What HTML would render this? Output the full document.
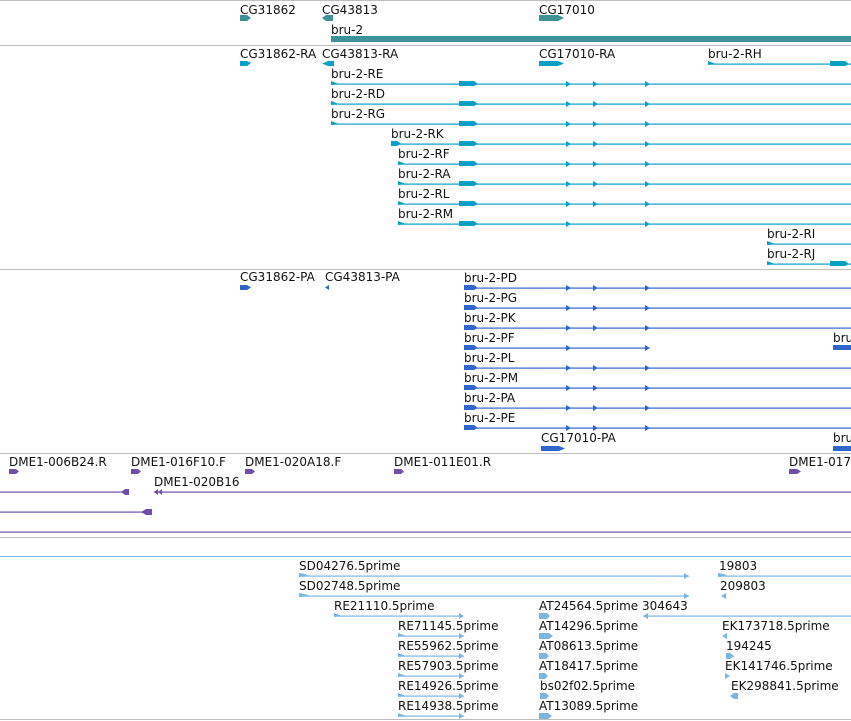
<!DOCTYPE html>
<html><head><meta charset="utf-8"><style>
html,body{margin:0;padding:0;background:#fff;}
svg{display:block;}
text{font-family:"DejaVu Sans","Liberation Sans",sans-serif;font-size:12px;fill:#111;}
</style></head><body>
<svg width="851" height="721" viewBox="0 0 851 721" xmlns="http://www.w3.org/2000/svg">
<defs>
<path id="st" d="M0,-3 L8,0 L0,1 Z"/>
<path id="ar" d="M0,-3 L5,0 L0,3 Z"/>
<path id="bx" d="M0,-3 L15,-3 L19,0 L15,2 L0,2 Z"/>
</defs>
<!-- separators -->
<g fill="#bdbdbd">
<rect x="0" y="0" width="851" height="1"/>
<rect x="0" y="45" width="851" height="1"/>
<rect x="0" y="269" width="851" height="1"/>
<rect x="0" y="453" width="851" height="1"/>
<rect x="0" y="537" width="851" height="1"/>
<rect x="0" y="719" width="851" height="1"/>
</g>
<rect x="0" y="556" width="851" height="1" fill="#7ab6e0"/>

<!-- genes -->
<text x="240" y="14">CG31862</text>
<text x="322" y="14">CG43813</text>
<text x="539" y="14">CG17010</text>
<text x="331" y="34">bru-2</text>
<g fill="#3d9197">
<path d="M240,15 L247,15 L251,18 L247,21 L240,21 Z"/>
<path d="M333,15 L326,15 L322,18 L326,21 L333,21 Z"/>
<path d="M539,15 L558,15 L564,18 L558,21 L539,21 Z"/>
<rect x="331" y="36" width="520" height="6"/>
</g>

<!-- transcripts -->
<text x="240" y="58">CG31862-RA</text>
<text x="322" y="58">CG43813-RA</text>
<text x="539" y="58">CG17010-RA</text>
<text x="708" y="58">bru-2-RH</text>
<text x="331" y="78">bru-2-RE</text>
<text x="331" y="98">bru-2-RD</text>
<text x="331" y="118">bru-2-RG</text>
<text x="391" y="138">bru-2-RK</text>
<text x="398" y="158">bru-2-RF</text>
<text x="398" y="178">bru-2-RA</text>
<text x="398" y="198">bru-2-RL</text>
<text x="398" y="218">bru-2-RM</text>
<text x="767" y="238">bru-2-RI</text>
<text x="767" y="258">bru-2-RJ</text>
<g fill="#0aa0c6">
<path d="M240,61 L247,61 L251,63 L247,66 L240,66 Z"/>
<path d="M334,61 L328,61 L322,63.5 L328,66 L334,66 Z"/>
<path d="M539,61 L558,61 L564,63.5 L558,66 L539,66 Z"/>
<rect x="708" y="63.5" width="143" height="1.2"/><use href="#st" x="708" y="64"/><use href="#bx" x="830" y="64" transform="scale(1)"/>
<rect x="331" y="83.5" width="520" height="1.2"/><use href="#st" x="331" y="84"/><use href="#bx" x="459" y="84"/><use href="#ar" x="566" y="84"/><use href="#ar" x="593" y="84"/><use href="#ar" x="645" y="84"/>
<rect x="331" y="103.5" width="520" height="1.2"/><use href="#st" x="331" y="104"/><use href="#bx" x="459" y="104"/><use href="#ar" x="566" y="104"/><use href="#ar" x="593" y="104"/><use href="#ar" x="645" y="104"/>
<rect x="331" y="123.5" width="520" height="1.2"/><use href="#st" x="331" y="124"/><use href="#bx" x="459" y="124"/><use href="#ar" x="566" y="124"/><use href="#ar" x="593" y="124"/><use href="#ar" x="645" y="124"/>
<rect x="391" y="143.5" width="460" height="1.2"/><path d="M391,141 L397,141 L401,143.5 L397,146 L391,146 Z"/><use href="#bx" x="459" y="144"/><use href="#ar" x="566" y="144"/><use href="#ar" x="593" y="144"/><use href="#ar" x="645" y="144"/>
<rect x="398" y="163.5" width="453" height="1.2"/><use href="#st" x="398" y="164"/><use href="#bx" x="459" y="164"/><use href="#ar" x="566" y="164"/><use href="#ar" x="593" y="164"/><use href="#ar" x="645" y="164"/>
<rect x="398" y="183.5" width="453" height="1.2"/><use href="#st" x="398" y="184"/><use href="#bx" x="459" y="184"/><use href="#ar" x="566" y="184"/><use href="#ar" x="593" y="184"/><use href="#ar" x="645" y="184"/>
<rect x="398" y="203.5" width="453" height="1.2"/><use href="#st" x="398" y="204"/><use href="#bx" x="459" y="204"/><use href="#ar" x="566" y="204"/><use href="#ar" x="593" y="204"/><use href="#ar" x="645" y="204"/>
<rect x="398" y="223.5" width="453" height="1.2"/><use href="#st" x="398" y="224"/><use href="#bx" x="459" y="224"/><use href="#ar" x="566" y="224"/><use href="#ar" x="645" y="224"/>
<rect x="767" y="243.5" width="84" height="1.2"/><use href="#st" x="767" y="244"/>
<rect x="767" y="263.5" width="84" height="1.2"/><use href="#st" x="767" y="264"/><use href="#bx" x="830" y="264"/>
</g>

<!-- proteins -->
<text x="240" y="281">CG31862-PA</text>
<text x="325" y="281">CG43813-PA</text>
<text x="464" y="282">bru-2-PD</text>
<text x="464" y="302">bru-2-PG</text>
<text x="464" y="322">bru-2-PK</text>
<text x="464" y="342">bru-2-PF</text>
<text x="833" y="342">bru-2</text>
<text x="464" y="362">bru-2-PL</text>
<text x="464" y="382">bru-2-PM</text>
<text x="464" y="402">bru-2-PA</text>
<text x="464" y="422">bru-2-PE</text>
<text x="541" y="442">CG17010-PA</text>
<text x="833" y="442">bru-2</text>
<g fill="#2f66cc">
<path d="M240,285 L247,285 L251,287.5 L247,290 L240,290 Z"/>
<path d="M329,285 L325,287.5 L329,290 Z"/>
<g id="p1"><rect x="464" y="287.5" width="387" height="1.2"/><path d="M464,285 L474,285 L478,288 L474,290 L464,290 Z"/><use href="#ar" x="566" y="288"/><use href="#ar" x="593" y="288"/><use href="#ar" x="645" y="288"/></g>
<use href="#p1" y="20"/><use href="#p1" y="40"/>
<rect x="464" y="347.5" width="182" height="1.2"/><path d="M464,345 L474,345 L478,348 L474,350 L464,350 Z"/><use href="#ar" x="566" y="348"/><use href="#ar" x="645" y="348"/>
<rect x="833" y="347.5" width="18" height="1.2"/><path d="M833,345 L851,345 L851,350 L833,350 Z"/>
<use href="#p1" y="80"/><use href="#p1" y="100"/><use href="#p1" y="120"/><use href="#p1" y="140"/>
<path d="M541,446 L559,446 L565,448.5 L559,451 L541,451 Z"/>
<rect x="833" y="446" width="18" height="5"/>
</g>

<!-- purple -->
<text x="9" y="466">DME1-006B24.R</text>
<text x="131" y="466">DME1-016F10.F</text>
<text x="245" y="466">DME1-020A18.F</text>
<text x="394" y="466">DME1-011E01.R</text>
<text x="789" y="466">DME1-017</text>
<text x="154" y="486">DME1-020B16</text>
<g fill="#6f4fa8">
<path d="M9,469 L16,469 L19,471.5 L16,474 L9,474 Z"/>
<path d="M131,469 L138,469 L141,471.5 L138,474 L131,474 Z"/>
<path d="M245,469 L252,469 L255,471.5 L252,474 L245,474 Z"/>
<path d="M394,469 L401,469 L404,471.5 L401,474 L394,474 Z"/>
<path d="M789,469 L797,469 L801,471.5 L797,474 L789,474 Z"/>
<rect x="0" y="491.5" width="129" height="1.2"/><path d="M129,489 L125,489 L121,492 L125,495 L129,495 Z"/>
<rect x="154" y="491.5" width="697" height="1.2"/><path d="M154,492 L158,489 L158,495 Z M158,492 L162,489 L162,495 Z"/>
<rect x="0" y="511.5" width="152" height="1.2"/><path d="M152,509 L146,509 L141,512 L146,515 L152,515 Z"/>
<rect x="0" y="531.5" width="851" height="1.2"/>
</g>

<!-- ESTs -->
<text x="299" y="570">SD04276.5prime</text>
<text x="719" y="570">19803</text>
<text x="299" y="590">SD02748.5prime</text>
<text x="720" y="590">209803</text>
<text x="334" y="610">RE21110.5prime</text>
<text x="539" y="610">AT24564.5prime 304643</text>
<text x="398" y="630">RE71145.5prime</text>
<text x="539" y="630">AT14296.5prime</text>
<text x="722" y="630">EK173718.5prime</text>
<text x="398" y="650">RE55962.5prime</text>
<text x="539" y="650">AT08613.5prime</text>
<text x="726" y="650">194245</text>
<text x="398" y="670">RE57903.5prime</text>
<text x="539" y="670">AT18417.5prime</text>
<text x="725" y="670">EK141746.5prime</text>
<text x="398" y="690">RE14926.5prime</text>
<text x="540" y="690">bs02f02.5prime</text>
<text x="731" y="690">EK298841.5prime</text>
<text x="398" y="710">RE14938.5prime</text>
<text x="539" y="710">AT13089.5prime</text>
<g fill="#7ab6e0">
<rect x="299" y="575.5" width="390" height="1.2"/><path d="M299,573 L305,574 L310,576 L299,577 Z"/><use href="#ar" x="684" y="576"/>
<rect x="718" y="575.5" width="133" height="1.2"/><path d="M718,573 L724,574 L728,576 L718,577 Z"/>
<rect x="299" y="595.5" width="390" height="1.2"/><path d="M299,593 L305,594 L310,596 L299,597 Z"/><use href="#ar" x="684" y="596"/>
<path d="M726,593 L721,596 L726,599 Z"/>
<rect x="334" y="615.5" width="129" height="1.2"/><use href="#st" x="334" y="616"/><use href="#ar" x="459" y="616"/>
<path d="M539,613 L547,613 L550,616 L547,619 L539,619 Z"/>
<rect x="643" y="615.5" width="208" height="1.2"/><path d="M648,613 L643,616 L648,619 Z"/>
<g id="re"><rect x="398" y="635.5" width="66" height="1.2"/><use href="#st" x="398" y="636"/><use href="#ar" x="459" y="636"/></g>
<use href="#re" y="20"/><use href="#re" y="40"/><use href="#re" y="60"/><use href="#re" y="80"/>
<path d="M539,633 L549,633 L553,636 L549,639 L539,639 Z"/>
<path d="M539,653 L546,653 L549,656 L546,659 L539,659 Z"/>
<path d="M539,673 L545,673 L548,676 L545,679 L539,679 Z"/>
<path d="M540,693 L546,693 L549,696 L546,699 L540,699 Z"/>
<path d="M539,713 L548,713 L552,716 L548,719 L539,719 Z"/>
<path d="M727,633 L722,636 L727,639 Z"/>
<path d="M726,653 L730,653 L734,656 L730,659 L726,659 Z"/>
<path d="M725,673 L730,676 L725,679 Z"/>
<path d="M738,693 L734,693 L730,696 L734,699 L738,699 Z"/>
</g>
</svg>
</body></html>
